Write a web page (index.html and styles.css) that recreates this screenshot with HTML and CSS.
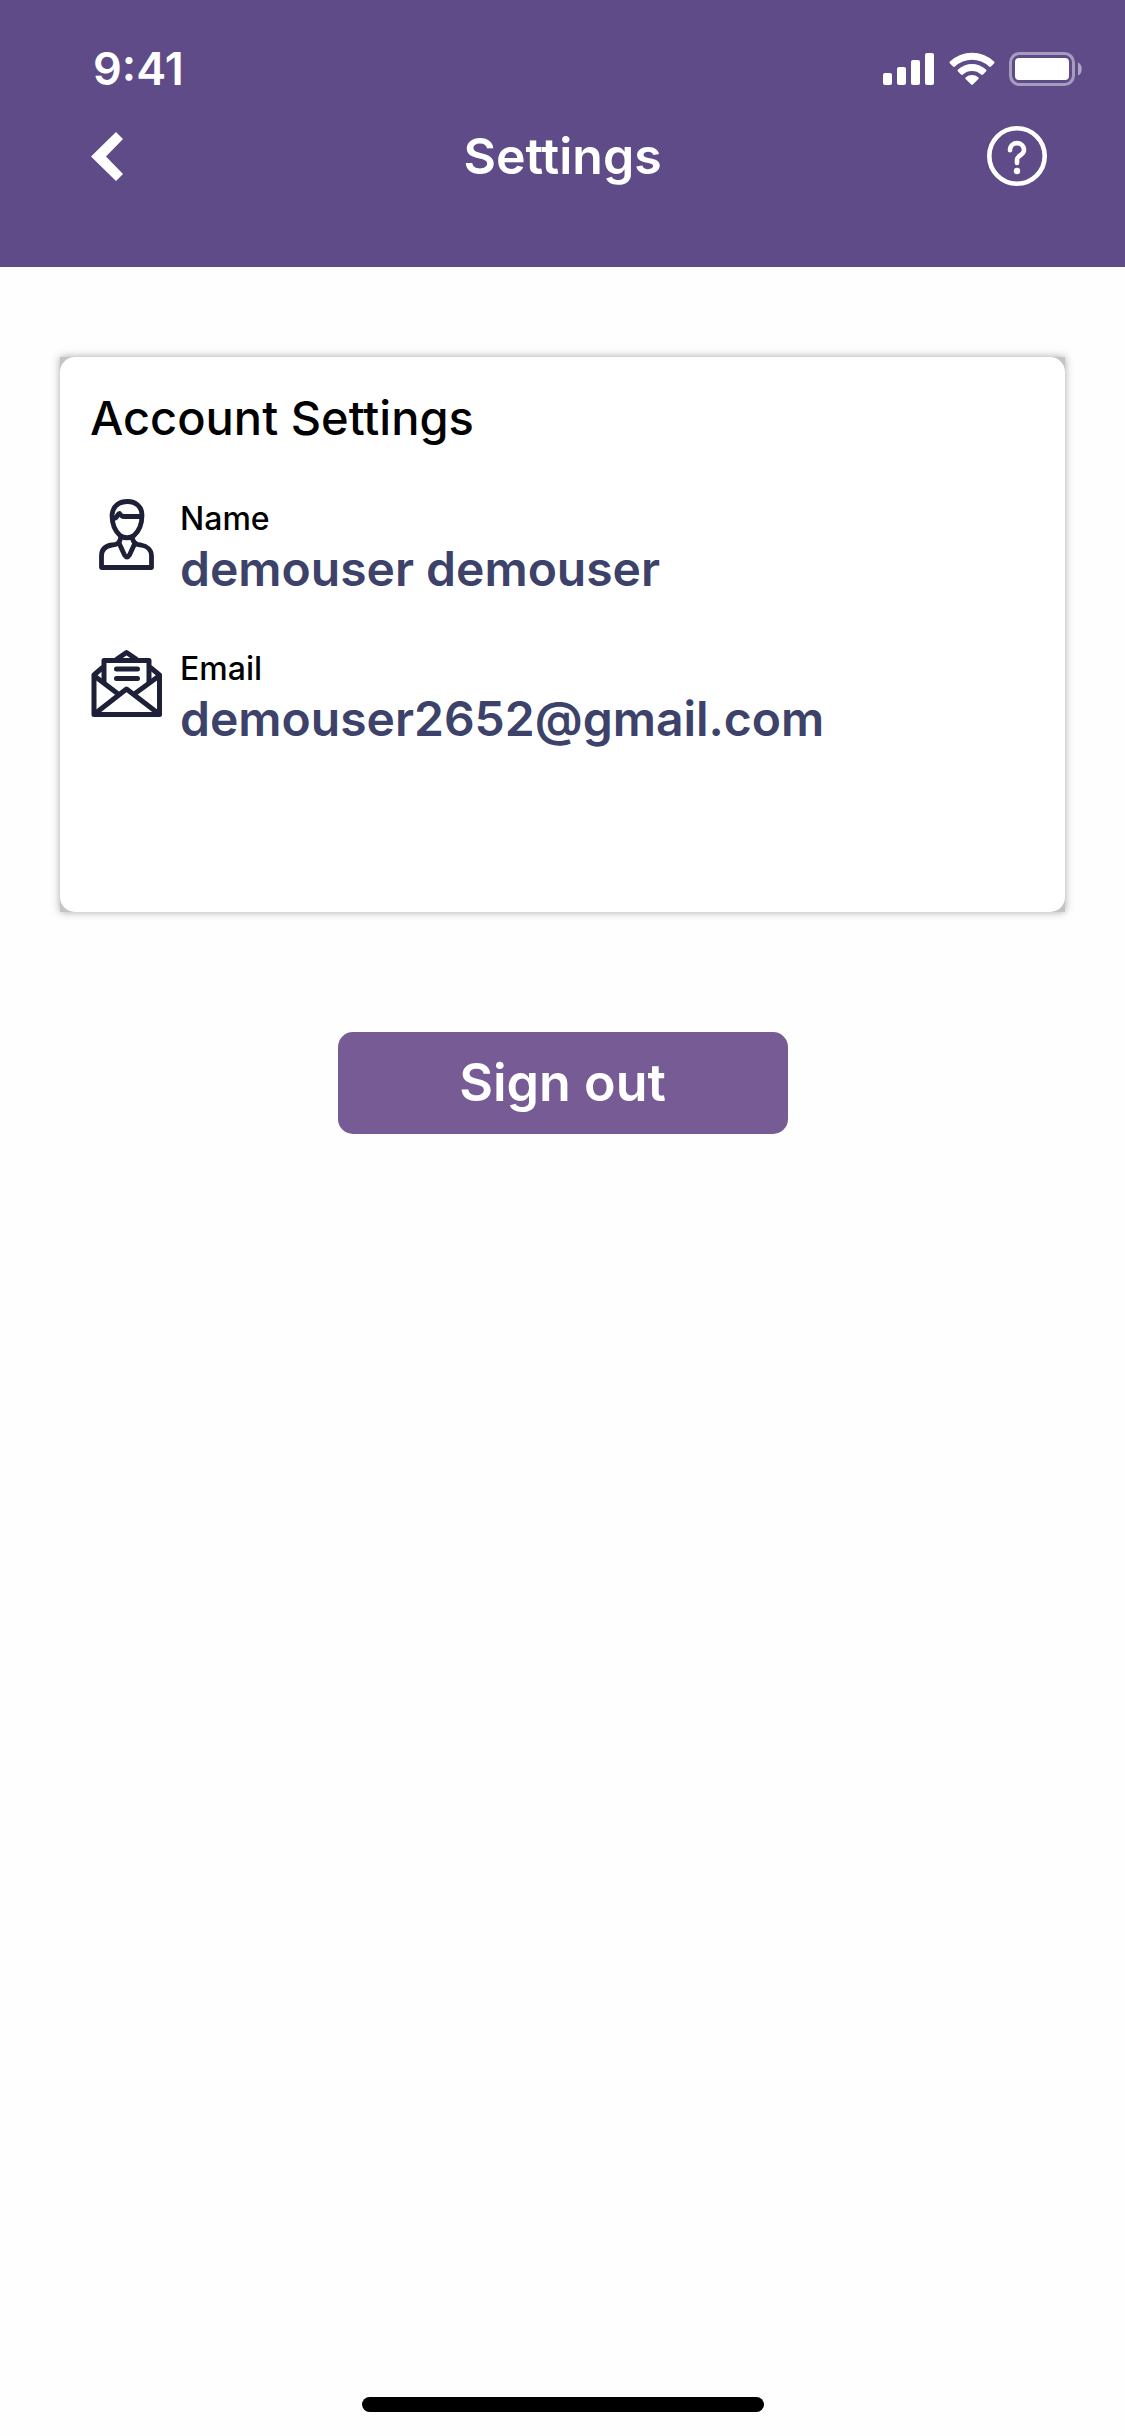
FILE: index.html
```html
<!DOCTYPE html>
<html lang="en">
<head>
<meta charset="utf-8">
<meta name="viewport" content="width=device-width, initial-scale=1">
<title>Settings</title>
<link rel="stylesheet" href="styles.css">
</head>
<body class="screen">
  <header class="header">
    <div class="status">
      <span class="status-time">9:41</span>
      <div class="status-icons">
        <svg width="52" height="34" viewBox="0 0 52 34" fill="#fff" aria-hidden="true">
          <rect x="0" y="21" width="9" height="12" rx="2"/>
          <rect x="14" y="15" width="9" height="18" rx="2"/>
          <rect x="28" y="8" width="9" height="25" rx="2"/>
          <rect x="42" y="1" width="9" height="32" rx="2"/>
        </svg>
        <svg width="46" height="34" viewBox="0 0 46 34" fill="#fff" aria-hidden="true">
          <path d="M1 9.600Q0 10.600 1 11.600L4 14.500Q5 15.400 6 14.500A24.800 24.800 0 0 1 40 14.500Q41 15.400 42 14.500L45 11.600Q46 10.600 45 9.600A32 32 0 0 0 1 9.600Z"/>
          <path d="M9 17.600Q8 18.600 9 19.500L12 22.500Q13 23.400 14 22.500A13.400 13.400 0 0 1 32 22.500Q33 23.400 34 22.500L37 19.500Q38 18.600 37 17.600A20.500 20.500 0 0 0 9 17.600Z"/>
          <path d="M16.600 25.400Q15.800 26.300 16.600 27L22.200 32.600Q23 33.400 23.800 32.600L29.400 27Q30.200 26.300 29.400 25.400A9.600 9.600 0 0 0 16.600 25.400Z"/>
        </svg>
        <svg width="74" height="34" viewBox="0 0 74 34" aria-hidden="true">
          <rect x="1.500" y="1.500" width="63" height="31" rx="9" fill="none" stroke="#fff" stroke-opacity=".45" stroke-width="3"/>
          <rect x="6" y="6" width="54" height="22" rx="4" fill="#fff"/>
          <path d="M69 10.500C74 12.500 74 21.500 69 23.500Z" fill="#fff" fill-opacity=".5"/>
        </svg>
      </div>
    </div>
    <nav class="nav">
      <button class="icon-button" type="button" aria-label="Back">
        <svg width="34" height="60" viewBox="0 0 34 60" fill="#fff" aria-hidden="true">
          <path d="M1 30.500L26 6L33 13L16 30.500L33 48L26 55Z"/>
        </svg>
      </button>
      <h1 class="nav-title">Settings</h1>
      <button class="icon-button icon-button-end" type="button" aria-label="Help">
        <svg width="60" height="60" viewBox="0 0 60 60" fill="none" stroke="#fff" aria-hidden="true">
          <circle cx="30" cy="30" r="27.700" stroke-width="4.600"/>
          <path d="M23 24.200C23 14.700 37 14.700 37 24.200C37 29 30 29.500 30 33.500V37" stroke-width="4.600" stroke-linecap="round" stroke-linejoin="round"/>
          <circle cx="30" cy="45" r="3.200" fill="#fff" stroke="none"/>
        </svg>
      </button>
    </nav>
  </header>
  <main class="main">
    <section class="card-frame">
      <div class="card">
        <h2 class="card-title">Account Settings</h2>
        <dl class="fields">
          <div class="field">
            <svg class="field-icon" width="72" height="72" viewBox="0 0 72 72" fill="none" stroke="#1d2036" stroke-width="4.800" stroke-linejoin="round" stroke-linecap="round" aria-hidden="true">
              <path d="M30 36.500C24 31 22 23 22 16C23 6 30 2.500 37.500 2.500C46 2.500 52 8 52 16C52 25 49 32 44 36.500C40 39.500 34 39.500 30 36.500Z"/>
              <path d="M23 20L26 18.500C27.500 17 28 14.500 29.500 14.500C31 17 32 17.500 34 17.500H51"/>
              <path d="M31 38C30 43 28 46 22 46C15 47 11.500 51 11.500 57V68.500H61.500V57C61.500 51 57 47 51 46C45 46 43 43 42 38"/>
              <path d="M29 44L34.500 56Q37 60 39.500 56L45 44"/>
            </svg>
            <div class="field-text">
              <dt class="field-label">Name</dt>
              <dd class="field-value">demouser demouser</dd>
            </div>
          </div>
          <div class="field">
            <svg class="field-icon" width="72" height="72" viewBox="0 0 72 72" fill="none" stroke="#1d2036" stroke-width="5" stroke-linejoin="round" stroke-linecap="round" aria-hidden="true">
              <path d="M14 33V11.500H59V33"/>
              <path d="M27 10L36.500 3.500L46 10M12 19L4 26V65.500H69.500V26L61 19"/>
              <path d="M4.500 27L27.500 44.500M69 27L45 44.500M4.500 65L36.500 40L69 65"/>
              <path d="M26.500 20H47.500M26.500 29.500H47.500"/>
            </svg>
            <div class="field-text">
              <dt class="field-label">Email</dt>
              <dd class="field-value">demouser2652@gmail.com</dd>
            </div>
          </div>
        </dl>
      </div>
    </section>
    <button class="sign-out" type="button">Sign out</button>
  </main>
  <div class="home-indicator"></div>
</body>
</html>
```
FILE: styles.css
```css
* {
  box-sizing: border-box;
  margin: 0;
}

.screen {
  display: flex;
  flex-direction: column;
  min-height: 100vh;
  background: #fefefe;
  color: #000;
  font-family: Inter, "Liberation Sans", sans-serif;
}

.header {
  padding: 44px 42px 81px 90px;
  background: #5e4b87;
  color: #fff;
}

.status {
  display: flex;
  justify-content: space-between;
  align-items: center;
  height: 50px;
}

.status-time {
  font-size: 45px;
  font-weight: 600;
  line-height: 50px;
  padding-left: 3px;
}

.status-icons {
  display: flex;
  gap: 14px;
}

.status-icons svg,
.icon-button svg {
  display: block;
}

.nav {
  display: grid;
  grid-template-columns: 60px 1fr 72px;
  align-items: center;
  margin-top: 32px;
  padding-right: 36px;
}

.icon-button {
  display: flex;
  padding: 0;
  border: 0;
  background: none;
  cursor: pointer;
}

.icon-button-end {
  justify-content: flex-end;
}

.nav-title {
  font-size: 50px;
  font-weight: 600;
  line-height: 60px;
  text-align: center;
}

.main {
  display: flex;
  flex-direction: column;
  align-items: center;
  gap: 120px;
  padding: 90px 60px;
}

.card-frame {
  width: 100%;
  background: #c4c4c4;
  box-shadow: 0 0 8px rgba(0, 0, 0, 0.35);
}

.card {
  padding: 29px 30px 163px;
  border-radius: 15px;
  background: #fff;
}

.card-title {
  font-size: 47px;
  font-weight: 500;
  line-height: 64px;
}

.fields {
  display: flex;
  flex-direction: column;
  gap: 50px;
  margin-top: 49px;
}

.field {
  display: flex;
  gap: 18px;
}

.field-icon {
  flex: none;
}

.field-label {
  font-size: 32px;
  font-weight: 500;
  line-height: 40px;
}

.field-value {
  font-size: 48px;
  font-weight: 600;
  line-height: 60px;
  color: #3c4269;
}

.sign-out {
  width: 450px;
  max-width: 100%;
  padding: 19px;
  border: 0;
  border-radius: 15px;
  background: #765b94;
  color: #fff;
  font: 600 52px/64px Inter, "Liberation Sans", sans-serif;
  cursor: pointer;
}

.home-indicator {
  width: 402px;
  max-width: 60%;
  height: 15px;
  margin: auto auto 24px;
  border-radius: 8px;
  background: #000;
}
```
